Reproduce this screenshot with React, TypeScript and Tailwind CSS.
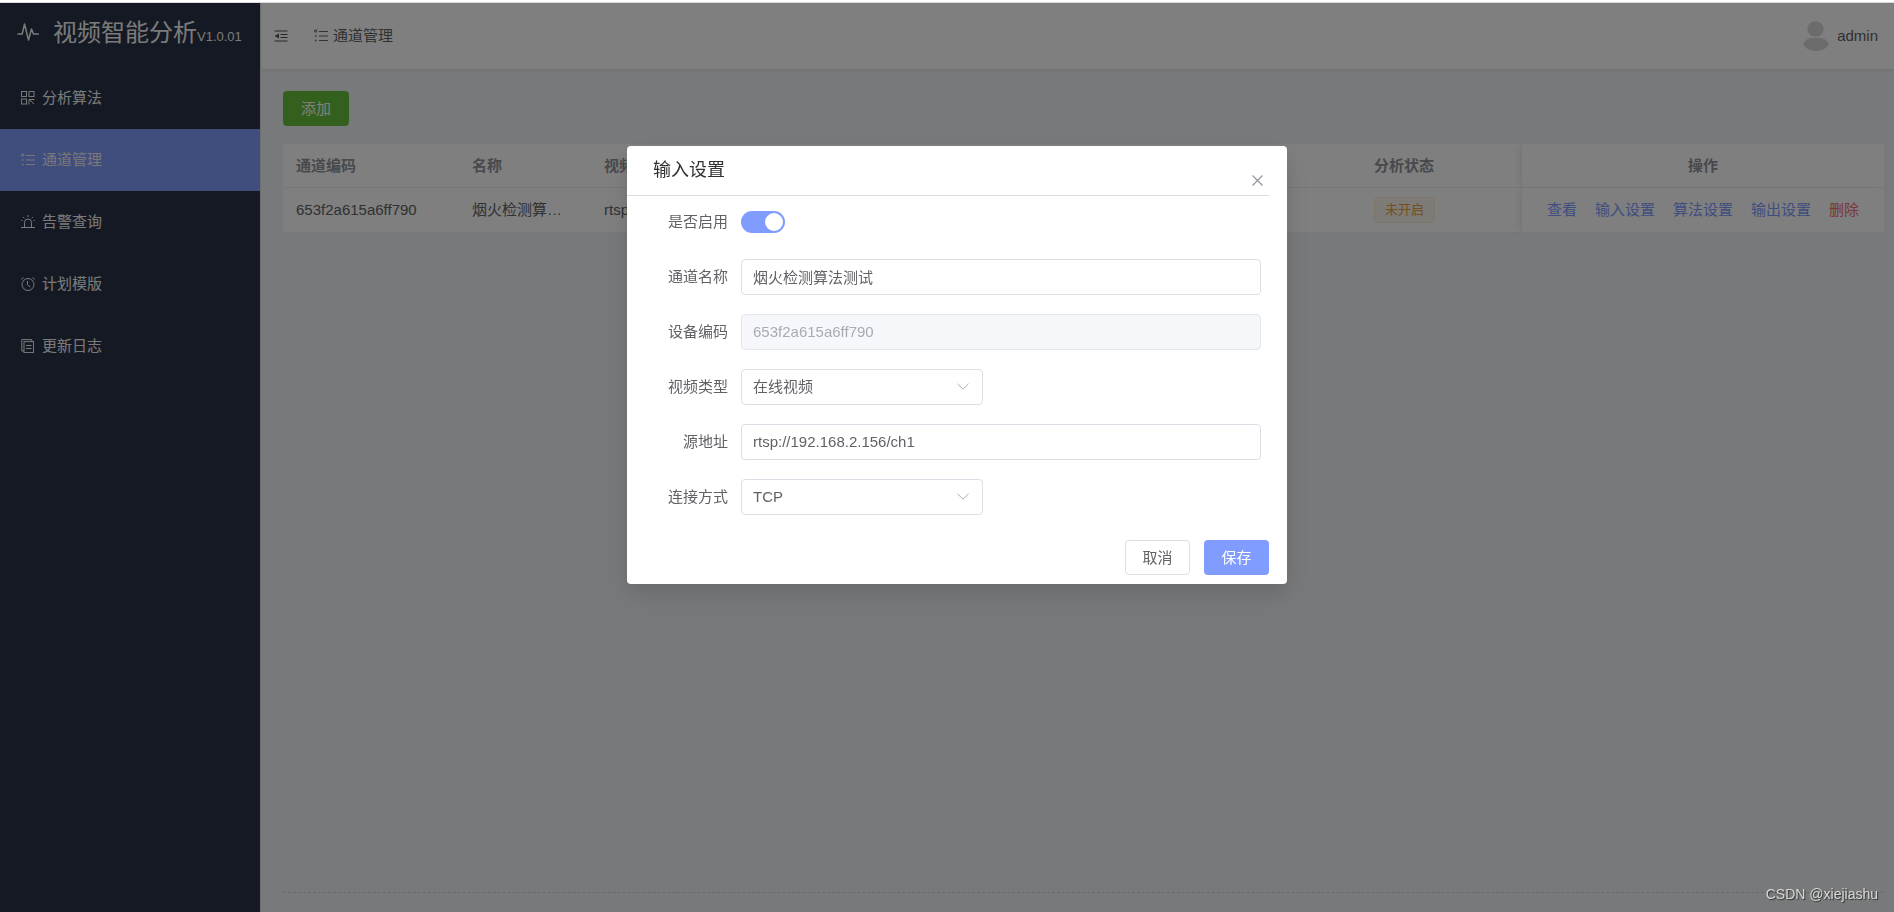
import { useState } from "react";
import type { ReactNode } from "react";

interface IconProps {
  className?: string;
}

function Icon({ className = "size-[14px]", children }: IconProps & { children: ReactNode }) {
  return (
    <svg viewBox="0 0 14 14" fill="none" stroke="currentColor" strokeWidth="1" className={`shrink-0 ${className}`} aria-hidden="true">
      {children}
    </svg>
  );
}

function PulseIcon() {
  return (
    <svg viewBox="0 0 22 18" fill="none" stroke="currentColor" strokeWidth="1.5" strokeLinejoin="round" strokeLinecap="round" className="w-[22px] h-[18px] shrink-0" aria-hidden="true">
      <path d="M1 11h4.200L7.500 1l4 16L14.500 6l2 5H21.300" />
    </svg>
  );
}

function GridIcon() {
  return (
    <Icon>
      <rect x="0.5" y="0.5" width="5" height="5" />
      <rect x="8" y="0.5" width="5" height="5" />
      <rect x="0.5" y="8" width="5" height="5" />
      <path d="M8 13.5V8.5h5.500M8.500 8.500l4.700 4.700" />
    </Icon>
  );
}

function ListIcon() {
  return (
    <Icon>
      <circle cx="1.700" cy="2" r="1.200" />
      <path d="M5 2.5h9M5 7h9M5 11.5h9" />
      <path d="M1 7h1.500M1 11.500h1.500" strokeWidth="1.5" />
    </Icon>
  );
}

function AlertIcon() {
  return (
    <Icon>
      <path d="M0 12.5h14M3.5 12.5V7.5a3.5 3.5 0 0 1 7 0v5M7 0v2M2.2 2l1 1.2M11.8 2l-1 1.2M0.3 5.2l1.3.6M13.7 5.2l-1.3.6" />
    </Icon>
  );
}

function ClockIcon() {
  return (
    <Icon>
      <circle cx="7" cy="7.5" r="6" />
      <path d="M6.5 4v3.700l2.700 2.300M0.300 2.400L2.600.6M13.700 2.400L11.400.6" />
    </Icon>
  );
}

function DocIcon() {
  return (
    <Icon>
      <path d="M3 12H.8V.6h10v1.800" />
      <rect x="3" y="2.6" width="9.5" height="11" />
      <path d="M5 6.5h5.500M5 9.500h5.500" />
    </Icon>
  );
}

function FoldIcon() {
  return (
    <Icon>
      <path d="M.5 2h13M6.5 5.5h7M6.5 8.5h7M.5 12h13" strokeWidth="1.2" />
      <path d="M5 4.6v4.800L.6 7z" fill="currentColor" stroke="none" />
    </Icon>
  );
}

const menu = [
  { label: "分析算法", icon: <GridIcon /> },
  { label: "通道管理", icon: <ListIcon />, active: true },
  { label: "告警查询", icon: <AlertIcon /> },
  { label: "计划模版", icon: <ClockIcon /> },
  { label: "更新日志", icon: <DocIcon /> },
];

const actions = ["查看", "输入设置", "算法设置", "输出设置"];

function Sidebar() {
  return (
    <aside className="w-[260px] shrink-0 bg-[#2a3346] text-[#f5f5f5]">
      <div className="flex items-center h-16 pb-1.5 pl-[17px]">
        <PulseIcon />
        <div className="flex items-baseline ml-3.5 pt-1.5 leading-8 whitespace-nowrap">
          <span className="text-2xl">视频智能分析</span>
          <span className="text-[13px]">V1.0.01</span>
        </div>
      </div>
      <nav>
        {menu.map((item) => (
          <a
            key={item.label}
            href="#"
            className={`flex items-center gap-[7px] h-[62px] pl-[21px] ${item.active ? "bg-[#809cfc] text-[#f0f0f0]" : ""}`}
          >
            {item.icon}
            {item.label}
          </a>
        ))}
      </nav>
    </aside>
  );
}

function Header() {
  return (
    <header className="flex items-center h-[66px] pl-[13px] pr-4 bg-white shadow-[0_1px_4px_rgba(0,21,41,0.08)]">
      <button type="button" aria-label="menu" className="text-[#505258]">
        <FoldIcon />
      </button>
      <div className="flex items-center gap-[5px] ml-[26px] pb-px text-[#606266]">
        <ListIcon />
        通道管理
      </div>
      <div className="flex items-center gap-2 ml-auto text-[#606266]">
        <svg viewBox="0 0 26 30" fill="#d8d8d8" className="w-[26px] h-[30px]" aria-hidden="true">
          <ellipse cx="12.5" cy="8" rx="8.2" ry="7.8" />
          <path d="M8 17h10c4 0 7.500 4 7.500 6.500C24 27.500 18.500 30 13 30S2 27.500.5 23.500C.5 21 4 17 8 17z" />
        </svg>
        admin
      </div>
    </header>
  );
}

const cell = "px-[13px] border-b border-[#ebeef5]";
const fixedCell = "border-b border-l border-[#ebeef5] bg-white shadow-[-4px_0_8px_-3px_rgba(0,0,0,0.1)]";

function ChannelTable() {
  return (
    <div className="overflow-hidden">
      <table className="w-full table-fixed border-separate border-spacing-0 bg-white text-left text-[#606266]">
        <colgroup>
          <col className="w-[176px]" />
          <col className="w-[132px]" />
          <col />
          <col className="w-[160px]" />
          <col className="w-[363px]" />
        </colgroup>
        <thead className="text-[#909399]">
          <tr className="h-11">
            <th className={`font-bold ${cell}`}>通道编码</th>
            <th className={`font-bold ${cell}`}>名称</th>
            <th className={`font-bold ${cell}`}>视频</th>
            <th className={`font-bold ${cell}`}>分析状态</th>
            <th className={`font-bold text-center ${fixedCell}`}>操作</th>
          </tr>
        </thead>
        <tbody>
          <tr className="h-[45px]">
            <td className={cell}>653f2a615a6ff790</td>
            <td className={cell}>
              <div className="w-24 truncate">烟火检测算法测试</div>
            </td>
            <td className={cell}>rtsp://</td>
            <td className={cell}>
              <span className="inline-flex items-center h-[26px] px-2.5 border border-[#faecd8] rounded bg-[#fdf6ec] text-[13px] text-[#e6a23c]">
                未开启
              </span>
            </td>
            <td className={fixedCell}>
              <div className="flex justify-center gap-[18px] text-[#809cff]">
                {actions.map((action) => (
                  <button key={action} type="button">{action}</button>
                ))}
                <button type="button" className="text-[#f56c6c]">删除</button>
              </div>
            </td>
          </tr>
        </tbody>
      </table>
    </div>
  );
}

function FormRow({ id, label, children }: { id: string; label: string; children: ReactNode }) {
  return (
    <div className="flex items-center h-9">
      <label htmlFor={id} className="w-[101px] pr-[13px] pb-px shrink-0 text-right">{label}</label>
      {children}
    </div>
  );
}

function SelectBox({ id, value }: { id: string; value: string }) {
  return (
    <div className="relative w-[242px]">
      <select id={id} defaultValue={value} className="block w-full h-9 px-[11px] border border-[#dcdfe6] rounded bg-white appearance-none outline-none">
        <option>{value}</option>
      </select>
      <svg viewBox="0 0 12 7" fill="none" stroke="#a8abb2" className="absolute right-3.5 top-3.5 w-3 h-[7px] pointer-events-none" aria-hidden="true">
        <path d="M.5.8L6 6.200 11.500.8" />
      </svg>
    </div>
  );
}

const inputClass = "flex-1 min-w-0 h-9 px-[11px] pb-0.5 border rounded outline-none";

function InputDialog() {
  const [enabled, setEnabled] = useState(true);
  const [name, setName] = useState("烟火检测算法测试");
  const [url, setUrl] = useState("rtsp://192.168.2.156/ch1");

  return (
    <div
      role="dialog"
      aria-labelledby="dialog-title"
      className="w-[660px] mt-[143px] rounded bg-white text-[#606266] shadow-[0_12px_32px_4px_rgba(0,0,0,0.06),0_8px_20px_rgba(0,0,0,0.08)]"
    >
      <div className="flex items-start justify-between h-[50px] mr-[18px] pl-[26px] pr-1.5 border-b border-[#dcdfe6]">
        <h2 id="dialog-title" className="mt-3 text-lg leading-6 text-[#303133]">输入设置</h2>
        <button type="button" aria-label="close" className="mt-[29px] text-[#909399]">
          <svg viewBox="0 0 11 11" fill="none" stroke="currentColor" strokeWidth="1.1" className="size-[11px]">
            <path d="M.5.5l10 10M10.500.5l-10 10" />
          </svg>
        </button>
      </div>
      <form className="flex flex-col gap-[19px] pt-2 pl-[13px] pr-[26px]">
        <FormRow id="enabled" label="是否启用">
          <input
            id="enabled"
            type="checkbox"
            role="switch"
            checked={enabled}
            onChange={(e) => setEnabled(e.target.checked)}
            className="flex items-center w-11 h-[22px] px-0.5 rounded-full appearance-none bg-[#dcdfe6] checked:bg-[#809cff] checked:justify-end before:size-[18px] before:rounded-full before:bg-white"
          />
        </FormRow>
        <FormRow id="name" label="通道名称">
          <input id="name" className={`${inputClass} border-[#dcdfe6]`} value={name} onChange={(e) => setName(e.target.value)} />
        </FormRow>
        <FormRow id="code" label="设备编码">
          <input id="code" disabled className={`${inputClass} border-[#e4e7ed] bg-[#f5f7fa] text-[#a8abb2]`} value="653f2a615a6ff790" />
        </FormRow>
        <FormRow id="type" label="视频类型">
          <SelectBox id="type" value="在线视频" />
        </FormRow>
        <FormRow id="url" label="源地址">
          <input id="url" className={`${inputClass} border-[#dcdfe6]`} value={url} onChange={(e) => setUrl(e.target.value)} />
        </FormRow>
        <FormRow id="protocol" label="连接方式">
          <SelectBox id="protocol" value="TCP" />
        </FormRow>
      </form>
      <div className="flex justify-end gap-3.5 pt-[25px] pb-[9px] pr-[18px]">
        <button type="button" className="w-[65px] h-[35px] border border-[#dcdfe6] rounded">取消</button>
        <button type="button" className="w-[65px] h-[35px] rounded bg-[#809cff] text-white">保存</button>
      </div>
    </div>
  );
}

export default function App() {
  return (
    <div className="flex flex-col min-h-screen bg-white text-[15px] leading-5 font-['Liberation_Sans','Noto_Sans_CJK_SC',sans-serif]">
      <div className="h-[3px] shrink-0 border-b border-[#dcdcdc]" />
      <div className="flex flex-1">
        <Sidebar />
        <div className="flex flex-col flex-1 min-w-0 border-l border-[#dcdee2] bg-[#f0f2f5]">
          <Header />
          <main className="flex flex-col flex-1 pt-[22px] pl-[22px] pr-2.5 pb-[19px]">
            <button type="button" className="self-start w-[66px] h-[35px] mb-[18px] rounded bg-[#67c23a] text-white">
              添加
            </button>
            <ChannelTable />
            <div className="mt-auto border-t border-dashed border-[#d2d5da]" />
          </main>
        </div>
      </div>

      <div className="fixed inset-x-0 top-[3px] bottom-0 flex items-start justify-center pl-5 bg-black/50">
        <InputDialog />
      </div>
      <div className="fixed right-4 bottom-2 text-sm text-[#d8d8d8] [text-shadow:1px_1px_1px_rgba(0,0,0,0.6)]">CSDN @xiejiashu</div>
    </div>
  );
}
